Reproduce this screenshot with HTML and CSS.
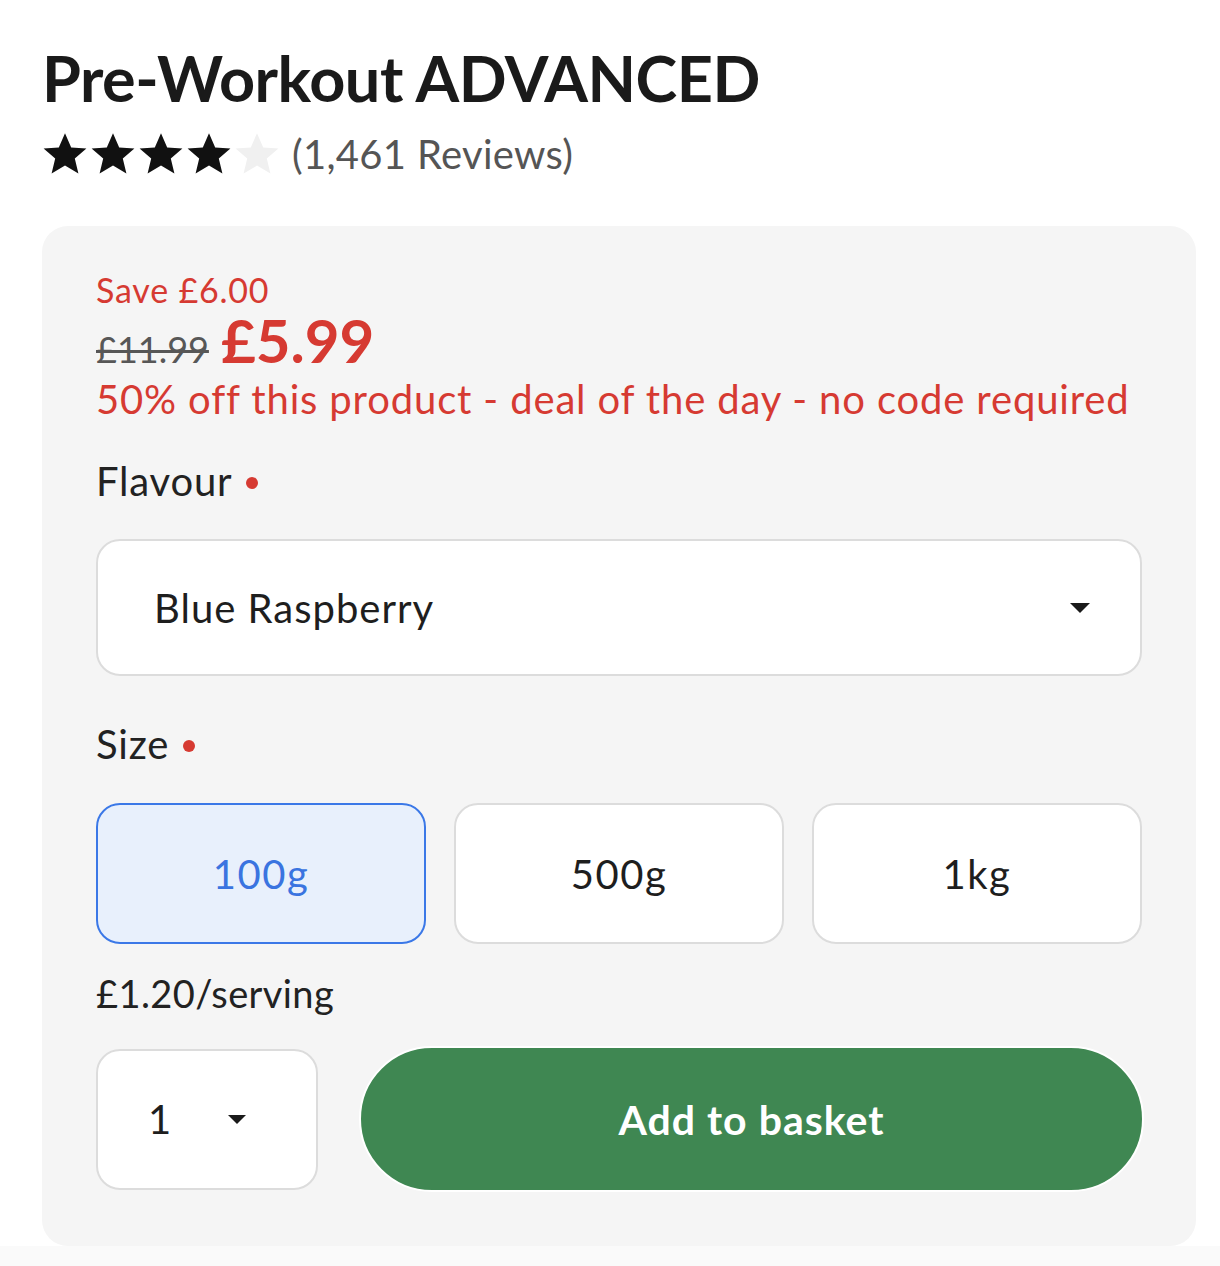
FILE: index.html
```html
<!DOCTYPE html>
<html lang="en">
<head>
<meta charset="utf-8">
<title>Pre-Workout ADVANCED</title>
<link rel="stylesheet" href="styles.css">
</head>
<body>
<main class="page">
  <h1 class="title">Pre-Workout ADVANCED</h1>
  <div class="rating">
    <div class="stars">
      <svg class="star" viewBox="0 0 24 24"><path d="M12 1.6l3.1 7.1 7.6.6-5.8 5 1.8 7.5L12 17.8l-6.7 4 1.8-7.5-5.8-5 7.6-.6z"/></svg>
      <svg class="star" viewBox="0 0 24 24"><path d="M12 1.6l3.1 7.1 7.6.6-5.8 5 1.8 7.5L12 17.8l-6.7 4 1.8-7.5-5.8-5 7.6-.6z"/></svg>
      <svg class="star" viewBox="0 0 24 24"><path d="M12 1.6l3.1 7.1 7.6.6-5.8 5 1.8 7.5L12 17.8l-6.7 4 1.8-7.5-5.8-5 7.6-.6z"/></svg>
      <svg class="star" viewBox="0 0 24 24"><path d="M12 1.6l3.1 7.1 7.6.6-5.8 5 1.8 7.5L12 17.8l-6.7 4 1.8-7.5-5.8-5 7.6-.6z"/></svg>
      <svg class="star star-empty" viewBox="0 0 24 24"><path d="M12 1.6l3.1 7.1 7.6.6-5.8 5 1.8 7.5L12 17.8l-6.7 4 1.8-7.5-5.8-5 7.6-.6z"/></svg>
    </div>
    <span class="reviews">(1,461 Reviews)</span>
  </div>

  <section class="card">
    <div class="save">Save £6.00</div>
    <div class="prices">
      <span class="was">£11.99</span>
      <span class="now">£5.99</span>
    </div>
    <div class="deal">50% off this product - deal of the day - no code required</div>

    <div class="label label-flavour">Flavour <span class="dot"></span></div>
    <div class="select">
      <span class="select-text">Blue Raspberry</span>
      <span class="caret"></span>
    </div>

    <div class="label label-size">Size <span class="dot"></span></div>
    <div class="sizes">
      <div class="size size-active">100g</div>
      <div class="size">500g</div>
      <div class="size">1kg</div>
    </div>

    <div class="serving">£1.20/serving</div>

    <div class="buy">
      <div class="qty">
        <span class="qty-num">1</span>
        <span class="caret caret-small"></span>
      </div>
      <button class="basket">Add to basket</button>
    </div>
  </section>
</main>
<div class="below"></div>
</body>
</html>
```
FILE: styles.css
```css
html, body {
  margin: 0;
  padding: 0;
  background: #ffffff;
}
body {
  font-family: Lato, "Liberation Sans", Arial, sans-serif;
  color: #1e1e1e;
  width: 1220px;
  height: 1266px;
  overflow: hidden;
}
.page {
  padding: 40px 24px 0 42px;
}
.title {
  margin: 0;
  font-size: 63px;
  font-weight: 700;
  line-height: 76px;
  color: #1a1a1a;
  letter-spacing: -0.5px;
}
.rating {
  display: flex;
  align-items: center;
  margin: 12px 0 0 -1px;
  height: 52px;
}
.stars {
  display: flex;
}
.star {
  width: 48px;
  height: 48px;
  fill: #111111;
}
.star-empty {
  fill: #f0f0f0;
}
.reviews {
  margin-left: 11px;
  font-size: 40px;
  letter-spacing: 0.3px;
  color: #555555;
}
.card {
  margin-top: 46px;
  width: 1154px;
  height: 1020px;
  box-sizing: border-box;
  background: #f5f5f5;
  border-radius: 26px;
  padding: 44px 54px 0 54px;
}
.save {
  color: #d63a32;
  font-size: 34px;
  letter-spacing: 0.8px;
  line-height: 40px;
}
.prices {
  display: flex;
  align-items: baseline;
  gap: 12px;
  line-height: 60px;
}
.was {
  color: #575757;
  font-size: 36px;
  text-decoration: line-through;
  text-decoration-thickness: 3px;
}
.now {
  color: #d63a32;
  font-size: 60px;
  font-weight: 700;
}
.deal {
  margin-top: -4px;
  color: #d63a32;
  font-size: 40px;
  letter-spacing: 0.85px;
  line-height: 48px;
}
.label {
  display: flex;
  align-items: center;
  gap: 14px;
  font-size: 40px;
  letter-spacing: 0.8px;
  line-height: 50px;
  color: #222222;
}
.label-flavour {
  margin-top: 33px;
}
.dot {
  width: 12px;
  height: 12px;
  border-radius: 50%;
  background: #d63a32;
  margin-top: 4px;
}
.select {
  margin-top: 33px;
  height: 137px;
  box-sizing: border-box;
  background: #ffffff;
  border: 2px solid #dcdcdc;
  border-radius: 24px;
  display: flex;
  align-items: center;
  justify-content: space-between;
  padding: 0 50px 0 56px;
}
.select-text {
  font-size: 40px;
  letter-spacing: 1px;
  color: #1e1e1e;
}
.caret {
  width: 0;
  height: 0;
  border-left: 10px solid transparent;
  border-right: 10px solid transparent;
  border-top: 10px solid #1a1a1a;
}
.caret-small {
  border-left-width: 9px;
  border-right-width: 9px;
  border-top-width: 9px;
}
.label-size {
  margin-top: 43px;
}
.sizes {
  display: grid;
  grid-template-columns: repeat(3, 1fr);
  gap: 28px;
  margin-top: 34px;
}
.size {
  height: 141px;
  box-sizing: border-box;
  background: #ffffff;
  border: 2px solid #dcdcdc;
  border-radius: 24px;
  display: flex;
  align-items: center;
  justify-content: center;
  font-size: 40px;
  letter-spacing: 1.5px;
  color: #1e1e1e;
}
.size-active {
  background: #e8f0fc;
  border-color: #3b78e7;
  color: #3a74e0;
}
.serving {
  margin-top: 24px;
  font-size: 38px;
  letter-spacing: 0.4px;
  line-height: 50px;
  color: #222222;
}
.buy {
  display: flex;
  align-items: center;
  gap: 41px;
  margin-top: 28px;
}
.qty {
  width: 222px;
  height: 141px;
  box-sizing: border-box;
  background: #ffffff;
  border: 2px solid #dcdcdc;
  border-radius: 24px;
  display: flex;
  align-items: center;
  padding: 0 0 0 50px;
  gap: 57px;
}
.qty-num {
  font-size: 40px;
  color: #1e1e1e;
}
.basket {
  flex: 1;
  height: 146px;
  margin-right: -2px;
  border: 2px solid #ffffff;
  border-radius: 73px;
  background: #3f8752;
  color: #ffffff;
  font-family: inherit;
  font-size: 41px;
  letter-spacing: 1px;
  font-weight: 700;
  cursor: pointer;
}
.below {
  height: 20px;
  background: #fafafa;
}
```
